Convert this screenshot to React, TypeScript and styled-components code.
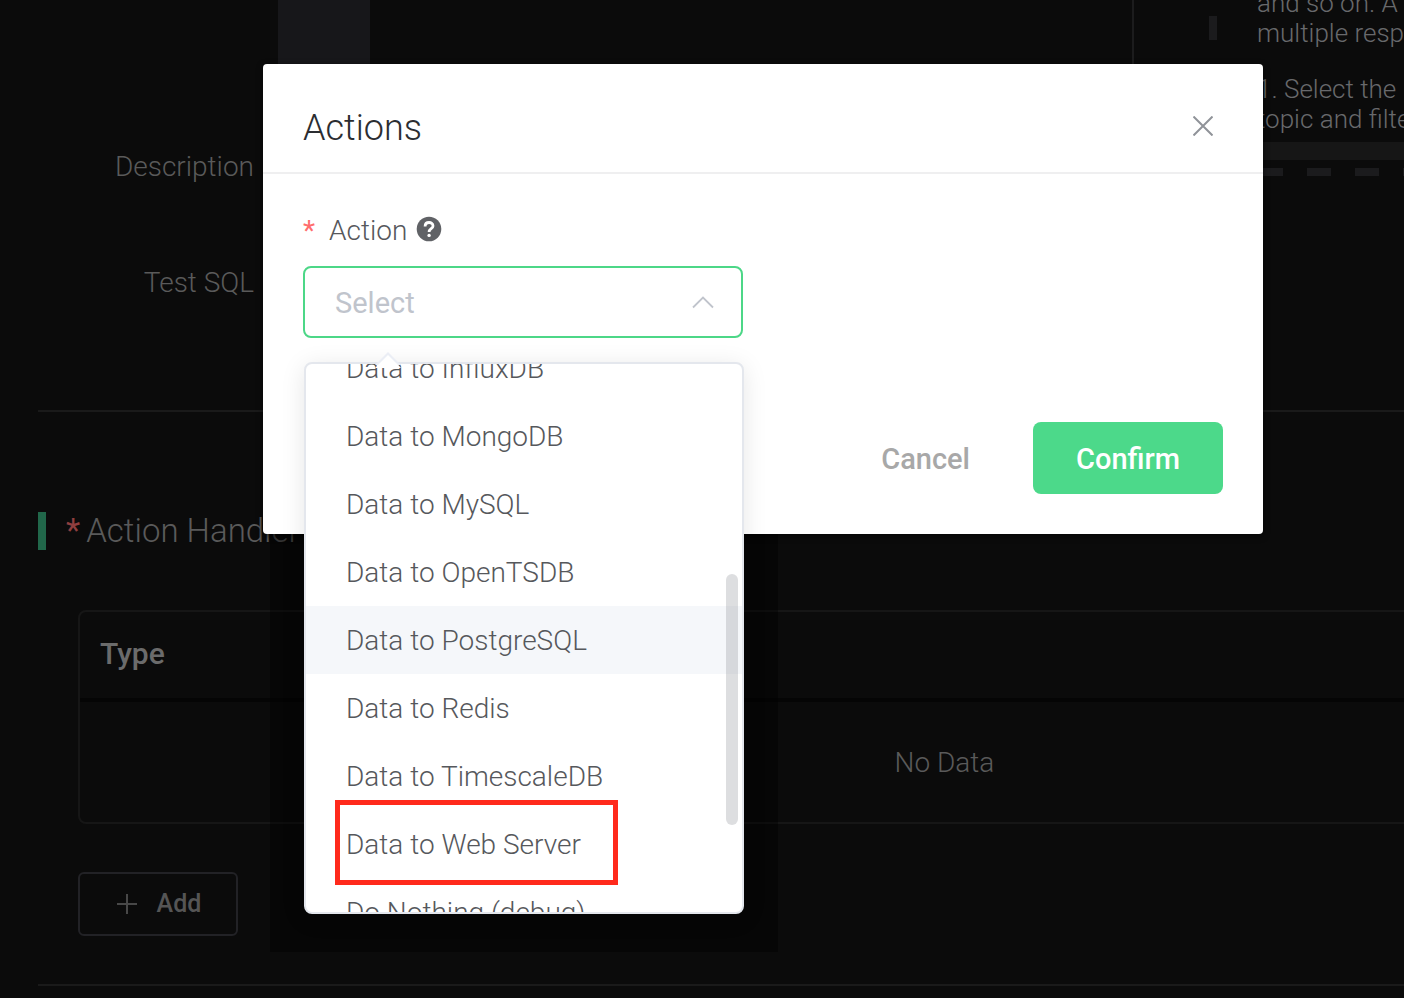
import React, { useLayoutEffect, useRef } from 'react';
import styled, { createGlobalStyle } from 'styled-components';

const GlobalStyle = createGlobalStyle`
  *, *::before, *::after { box-sizing: border-box; }
  body {
    margin: 0;
    background: #0b0b0b;
    color: #56585c;
    font-family: Roboto, "Liberation Sans", sans-serif;
    font-size: 28px;
    font-weight: 300;
    line-height: 36px;
  }
  button, input { font: inherit; }
`;

const Page = styled.div`
  position: relative;
  min-height: 100vh;
  overflow: hidden;
`;

const Backdrop = styled.main`
  padding-left: 38px;
  color: #5a5a5a;
`;

const RuleSection = styled.section`
  display: flex;
  align-items: flex-start;
  padding-bottom: 70px;
  border-bottom: 2px solid #1a1a1a;
`;

const RuleForm = styled.div`
  flex: 1;
`;

const EditorRow = styled.div`
  height: 108px;
  padding: 0 0 8px 240px;
`;

const Editor = styled.div`
  height: 100%;
  border-right: 2px solid #1c1c1d;
`;

const Gutter = styled.div`
  width: 92px;
  height: 100%;
  background: #17171a;
`;

const FormRow = styled.div`
  display: flex;
  align-items: center;
  justify-content: flex-end;
  width: 216px;
  height: 116px;
  padding-top: 2px;
`;

const Tips = styled.aside`
  display: flex;
  flex-direction: column;
  width: 195px;
  height: 176px;
  margin-left: 75px;
  padding-bottom: 8px;
  overflow: hidden;
  background:
    repeating-linear-gradient(to bottom, transparent 0 16px, #1b1b1d 16px 40px, transparent 40px 48px) 0 0 / 8px 100% no-repeat,
    repeating-linear-gradient(to right, transparent 0 2px, #1b1b1d 2px 26px, transparent 26px 48px) 0 100% / 100% 8px no-repeat;
`;

const TipsBody = styled.div`
  display: flex;
  flex: 1;
  flex-direction: column;
  justify-content: flex-end;
  gap: 26px;
  min-height: 0;
  padding: 0 0 8px 48px;
  color: #68696c;
  font-size: 26px;
  line-height: 30px;
  white-space: nowrap;

  p { margin: 0; }
`;

const TipsScroll = styled.div`
  height: 18px;
  margin: 0 0 8px 8px;
  background: #161616;
`;

const HandlerSection = styled.section`
  padding: 100px 0 48px;
  border-bottom: 2px solid #1a1a1a;
`;

const HandlerTitle = styled.h2`
  display: flex;
  align-items: center;
  gap: 6px;
  height: 38px;
  margin: 0 0 60px;
  padding-left: 20px;
  border-left: 8px solid #21674a;
  font-size: 33px;
  font-weight: 300;
`;

const Required = styled.span<{ $dim?: boolean }>`
  color: ${(p) => (p.$dim ? '#8f3f3f' : '#ff6d6d')};
  font-weight: 400;
`;

const TableFrame = styled.div`
  width: calc(100% + 367px);
  margin-left: 40px;
  border: 2px solid #161616;
  border-radius: 8px;
`;

const Table = styled.table`
  width: 100%;
  border-collapse: separate;
  border-spacing: 0;

  th {
    height: 90px;
    padding: 0 20px 2px;
    border-bottom: 4px solid #050505;
    color: #6b6b6b;
    font-size: 30px;
    font-weight: 500;
    text-align: left;
  }

  td {
    height: 120px;
    padding: 2px 0 0;
    text-align: center;
  }
`;

const AddButton = styled.button`
  display: flex;
  align-items: center;
  justify-content: center;
  gap: 20px;
  width: 160px;
  height: 64px;
  margin: 48px 0 0 40px;
  padding: 0 0 0 2px;
  border: 2px solid #222226;
  border-radius: 6px;
  background: transparent;
  color: #555;
  font-size: 25px;
  font-weight: 500;
`;

const Overlay = styled.div`
  position: absolute;
  inset: 0;
  z-index: 1;
  padding: 64px 141px 0 263px;
`;

const Dialog = styled.div`
  border-radius: 4px;
  background: #fff;
  box-shadow: 0 2px 6px rgba(0, 0, 0, 0.6);
`;

const DialogHeader = styled.header`
  display: flex;
  align-items: center;
  justify-content: space-between;
  height: 110px;
  padding: 18px 40px 0;
  border-bottom: 2px solid #efeff0;
`;

const DialogTitle = styled.h1`
  margin: 0;
  padding-top: 2px;
  color: #2b2d31;
  font-size: 36px;
  font-weight: 300;
  line-height: 44px;
`;

const CloseButton = styled.button`
  display: flex;
  width: 40px;
  height: 40px;
  align-items: center;
  justify-content: center;
  margin-bottom: 2px;
  padding: 0;
  border: 0;
  background: none;
  color: #909399;
`;

const DialogBody = styled.div`
  padding: 38px 40px 0;
`;

const FieldLabel = styled.label`
  display: flex;
  align-items: center;
  height: 36px;
  margin-bottom: 18px;
  padding-top: 2px;

  ${Required} { margin-right: 14px; }
  svg { margin: 0 0 4px 9px; }
`;

const SelectBox = styled.div`
  position: relative;
  width: 440px;

  &::before {
    content: '';
    position: absolute;
    z-index: -1;
    inset: 0 -35px -614px -33px;
    background: rgba(0, 0, 0, 0.4);
  }
`;

const SelectInput = styled.input`
  display: block;
  width: 100%;
  height: 72px;
  padding: 2px 60px 0 30px;
  border: 2px solid #4cd787;
  border-radius: 8px;
  outline: none;
  background: #fff;
  font-size: 29px;
  font-weight: 400;

  &::placeholder { color: #c0c4cc; opacity: 1; }
`;

const SelectArrow = styled.svg`
  position: absolute;
  top: 29px;
  right: 29px;
`;

const Dropdown = styled.div`
  position: absolute;
  z-index: 2;
  top: 96px;
  left: 1px;
  width: 100%;
  border: 2px solid #e4e7ed;
  border-radius: 8px;
  background: #fff;
  box-shadow: 0 4px 24px rgba(0, 0, 0, 0.1);
`;

const DropdownTip = styled.svg`
  position: absolute;
  top: -12px;
  left: 68px;
`;

const OptionList = styled.ul`
  height: 548px;
  margin: 0;
  padding: 0;
  overflow: hidden;
  border-radius: 6px;
  list-style: none;
`;

const Option = styled.li<{ $active?: boolean }>`
  position: relative;
  height: 68px;
  padding: 0 40px;
  background: ${(p) => (p.$active ? '#f5f7fa' : 'transparent')};
  line-height: 70px;
  white-space: nowrap;
`;

const Marker = styled.span`
  position: absolute;
  top: -10px;
  left: 29px;
  width: 283px;
  height: 85px;
  border: 5px solid #ff2a1c;
`;

const ScrollThumb = styled.span`
  position: absolute;
  top: 210px;
  right: 4px;
  width: 12px;
  height: 251px;
  border-radius: 6px;
  background: rgba(144, 147, 153, 0.3);
`;

const DialogFooter = styled.footer`
  display: flex;
  justify-content: flex-end;
  gap: 20px;
  padding: 84px 40px 40px;
`;

const DialogButton = styled.button<{ $primary?: boolean }>`
  height: 72px;
  padding: 2px 43px 0;
  border: 0;
  border-radius: 8px;
  background: ${(p) => (p.$primary ? '#4cd98a' : 'transparent')};
  color: ${(p) => (p.$primary ? '#fff' : '#a8a8a8')};
  font-size: 29px;
  font-weight: 500;
`;

const OPTIONS = [
  'Data to InfluxDB',
  'Data to MongoDB',
  'Data to MySQL',
  'Data to OpenTSDB',
  'Data to PostgreSQL',
  'Data to Redis',
  'Data to TimescaleDB',
  'Data to Web Server',
  'Do Nothing (debug)',
];

const SCROLL_OFFSET = 30;

function ActionSelect() {
  const listRef = useRef<HTMLUListElement>(null);

  useLayoutEffect(() => {
    if (listRef.current) listRef.current.scrollTop = SCROLL_OFFSET;
  }, []);

  return (
    <SelectBox>
      <SelectInput
        id="action"
        role="combobox"
        aria-expanded="true"
        aria-controls="action-options"
        placeholder="Select"
        readOnly
      />
      <SelectArrow width="22" height="14" viewBox="0 0 22 14" fill="none" stroke="#c0c4cc" strokeWidth="1.8">
        <path d="M1 12.5 L11 2.5 L21 12.5" />
      </SelectArrow>
      <Dropdown>
        <OptionList id="action-options" role="listbox" ref={listRef}>
          {OPTIONS.map((name) => (
            <Option
              key={name}
              role="option"
              aria-selected={name === 'Data to PostgreSQL'}
              $active={name === 'Data to PostgreSQL'}
            >
              {name}
              {name === 'Data to Web Server' && <Marker />}
            </Option>
          ))}
        </OptionList>
        <DropdownTip width="28" height="17" viewBox="0 0 28 17">
          <path d="M1 13 L14 0 L27 13 Z" fill="#ebeef5" />
          <path d="M1 16 L14 3 L27 16 Z" fill="#fff" />
        </DropdownTip>
        <ScrollThumb />
      </Dropdown>
    </SelectBox>
  );
}

export default function App() {
  return (
    <Page>
      <GlobalStyle />
      <Backdrop>
        <RuleSection>
          <RuleForm>
            <EditorRow>
              <Editor>
                <Gutter />
              </Editor>
            </EditorRow>
            <FormRow>Description</FormRow>
            <FormRow>Test SQL</FormRow>
          </RuleForm>
          <Tips>
            <TipsBody>
              <p>
                and so on. A
                <br />
                multiple resp
              </p>
              <p>
                1. Select the
                <br />
                topic and filte
              </p>
            </TipsBody>
            <TipsScroll />
          </Tips>
        </RuleSection>
        <HandlerSection>
          <HandlerTitle>
            <Required $dim>*</Required>
            Action Handler
          </HandlerTitle>
          <TableFrame>
            <Table>
              <thead>
                <tr>
                  <th scope="col">Type</th>
                </tr>
              </thead>
              <tbody>
                <tr>
                  <td>No Data</td>
                </tr>
              </tbody>
            </Table>
          </TableFrame>
          <AddButton type="button">
            <svg width="20" height="20" viewBox="0 0 20 20" stroke="#484848" strokeWidth="2">
              <path d="M10 0 V20 M0 10 H20" />
            </svg>
            Add
          </AddButton>
        </HandlerSection>
      </Backdrop>
      <Overlay>
        <Dialog role="dialog" aria-labelledby="dialog-title">
          <DialogHeader>
            <DialogTitle id="dialog-title">Actions</DialogTitle>
            <CloseButton type="button" aria-label="Close">
              <svg width="20" height="20" viewBox="0 0 20 20" stroke="currentColor" strokeWidth="2">
                <path d="M0.5 0.5 L19.5 19.5 M19.5 0.5 L0.5 19.5" />
              </svg>
            </CloseButton>
          </DialogHeader>
          <DialogBody>
            <FieldLabel htmlFor="action">
              <Required>*</Required>
              Action
              <svg width="26" height="26" viewBox="0 0 26 26" fill="none">
                <circle cx="13" cy="13" r="12.3" fill="#606266" />
                <path
                  d="M9.1 10.4 C9.1 5.2 17 5.4 17 9.9 C17 12.8 13.1 12.6 13.1 16"
                  stroke="#fff"
                  strokeWidth="2.8"
                />
                <circle cx="13.1" cy="19.4" r="1.7" fill="#fff" />
              </svg>
            </FieldLabel>
            <ActionSelect />
          </DialogBody>
          <DialogFooter>
            <DialogButton type="button">Cancel</DialogButton>
            <DialogButton type="button" $primary>
              Confirm
            </DialogButton>
          </DialogFooter>
        </Dialog>
      </Overlay>
    </Page>
  );
}
